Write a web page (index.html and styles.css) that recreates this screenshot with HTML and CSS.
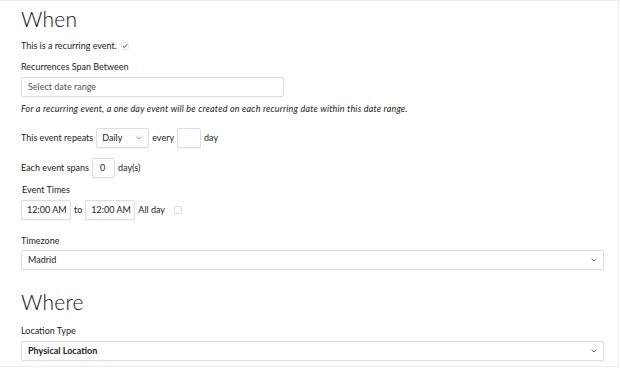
FILE: index.html
```html
<!DOCTYPE html>
<html lang="en">
<head>
    <meta charset="UTF-8">
    <title>Event - When / Where</title>
    <link rel="stylesheet" href="styles.css">
</head>
<body>
    <div class="card">
        <h1>When</h1>

        <div class="row line">
            <span>This is a recurring event.</span>
            <span class="check checked">
                <svg width="6" height="6" viewBox="0 0 6 6"><path d="M0.8 3.2 L2.3 4.6 L5.2 1.2" fill="none" stroke="#333" stroke-width="0.9"/></svg>
            </span>
        </div>

        <div class="label label-span">Recurrences Span Between</div>
        <div class="field date-range">Select date range</div>

        <p class="note">For a recurring event, a one day event will be created on each recurring date within this date range.</p>

        <div class="row repeats">
            <span>This event repeats</span>
            <div class="field select small-select">
                <span>Daily</span>
                <svg class="chev" width="6" height="4" viewBox="0 0 6 4"><path d="M0.6 0.8 L3 3 L5.4 0.8" fill="none" stroke="#888" stroke-width="0.9"/></svg>
            </div>
            <span>every</span>
            <div class="field num every"></div>
            <span>day</span>
        </div>

        <div class="row spans">
            <span>Each event spans</span>
            <div class="field num span-days">0</div>
            <span>day(s)</span>
        </div>

        <div class="label label-times">Event Times</div>
        <div class="row times">
            <div class="field time">12:00 AM</div>
            <span>to</span>
            <div class="field time">12:00 AM</div>
            <span>All day</span>
            <span class="check allday"></span>
        </div>

        <div class="label label-tz">Timezone</div>
        <div class="field select wide">
            <span>Madrid</span>
            <svg class="chev" width="6" height="4" viewBox="0 0 6 4"><path d="M0.6 0.8 L3 3 L5.4 0.8" fill="none" stroke="#666" stroke-width="1"/></svg>
        </div>

        <h2>Where</h2>

        <div class="label label-loc">Location Type</div>
        <div class="field select wide strong">
            <span>Physical Location</span>
            <svg class="chev" width="6" height="4" viewBox="0 0 6 4"><path d="M0.6 0.8 L3 3 L5.4 0.8" fill="none" stroke="#666" stroke-width="1"/></svg>
        </div>
    </div>
</body>
</html>
```

FILE: styles.css
```css
body {
    margin: 0;
    padding: 0;
    background: #fff;
    color: #222;
    font-family: Lato, "Noto Sans", sans-serif;
    font-size: 9px;
    line-height: 12px;
}

.card {
    width: 619px;
    height: 367px;
    border: 1px solid #eee;
    border-left: none;
    padding-left: 21px;
    box-sizing: border-box;
}

h1, h2 {
    font-size: 21px;
    font-weight: 300;
    line-height: 24px;
    color: #111;
    margin: 0;
    letter-spacing: 0.2px;
}

h1 {
    padding-top: 6px;
}

h2 {
    margin-top: 20px;
}

.row {
    display: flex;
    align-items: center;
    gap: 3px;
    white-space: nowrap;
}

.line {
    margin-top: 9px;
}

.label {
    color: #222;
}

.label-span { margin-top: 9px; }
.label-times { margin-top: 6px; padding-left: 1px; }
.label-tz { margin-top: 15px; }
.label-loc { margin-top: 11px; }

.field {
    display: flex;
    align-items: center;
    height: 20px;
    box-sizing: border-box;
    border: 1px solid #dedede;
    border-radius: 2px;
    box-shadow: 0 1px 1px rgba(0, 0, 0, 0.04);
    padding: 0 6px;
    background: #fff;
    color: #222;
    white-space: nowrap;
}

.date-range {
    width: 263px;
    margin-top: 4px;
    color: #555;
}

.note {
    margin: 6px 0 0;
    font-style: italic;
    color: #222;
    letter-spacing: 0.2px;
}

.repeats { margin-top: 13px; }
.spans { margin-top: 10px; }
.times { margin-top: 4px; }

.select {
    justify-content: space-between;
}

.small-select {
    width: 53px;
    padding-left: 5px;
}

.num {
    width: 24px;
    justify-content: flex-start;
    padding-left: 7px;
}

.span-days {
    width: 23px;
}

.time {
    width: 50px;
    padding: 0 4px 0 5px;
}

.wide {
    width: 583px;
    margin-top: 3px;
    padding: 0 6px 0 6px;
}

.label-loc + .wide {
    margin-top: 4px;
}

.strong {
    font-weight: 700;
}

.chev {
    flex: none;
}

.check {
    display: inline-flex;
    align-items: center;
    justify-content: center;
    width: 6px;
    height: 6px;
    border: 1px solid #ddd;
    border-radius: 1px;
    margin-left: 1px;
}

.checked {
    border-color: #eee;
}

.allday {
    width: 6px;
    height: 6px;
    margin-left: 6px;
}
```
